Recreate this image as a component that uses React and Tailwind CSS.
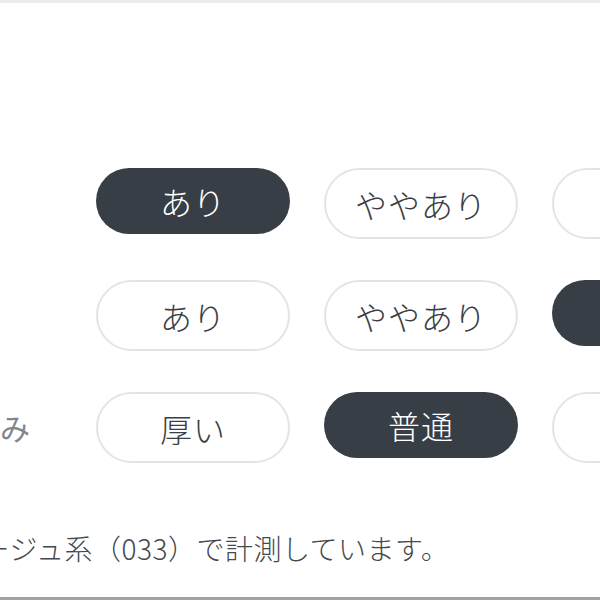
const rows = [
  { label: "", options: ["あり", "ややあり", "なし"], selected: 0 },
  { label: "", options: ["あり", "ややあり", "なし"], selected: 2 },
  { label: "厚み", options: ["厚い", "普通", "薄い"], selected: 1 },
];

function Pill({ text, active }) {
  if (active) {
    return (
      <div className="w-[194px] h-[66px] shrink-0 rounded-full bg-[#383e46] text-white flex items-center justify-center text-[32px] font-light tracking-[1px]">
        {text}
      </div>
    );
  }
  return (
    <div className="w-[194px] h-[71px] shrink-0 rounded-full border-2 border-[#e4e4e4] bg-white text-[#3a3e44] flex items-center justify-center text-[32px] font-light tracking-[1px]">
      {text}
    </div>
  );
}

export default function App() {
  return (
    <div
      className="w-[600px] h-[600px] overflow-hidden bg-white border-t-[3px] border-t-[#ececec] border-b-[3px] border-b-[#a3a3a3] flex flex-col"
      style={{ fontFamily: '"Noto Sans CJK JP", "Noto Sans", sans-serif' }}
    >
      <div className="flex flex-col gap-[41px] pt-[165px]">
        {rows.map((row, i) => (
          <div key={i} className="flex items-start">
            <div className="w-[96px] h-[71px] shrink-0 flex items-center overflow-hidden">
              <span className="-ml-[30px] text-[30px] text-[#80868d] whitespace-nowrap">{row.label}</span>
            </div>
            <div className="flex gap-[34px]">
              {row.options.map((opt, j) => (
                <Pill key={j} text={opt} active={j === row.selected} />
              ))}
            </div>
          </div>
        ))}
      </div>
      <p className="mt-[66px] -ml-[47px] text-[28px] font-light tracking-[0.5px] leading-[38px] text-[#45484d] whitespace-nowrap">
        ベージュ系（033）で計測しています。
      </p>
    </div>
  );
}
